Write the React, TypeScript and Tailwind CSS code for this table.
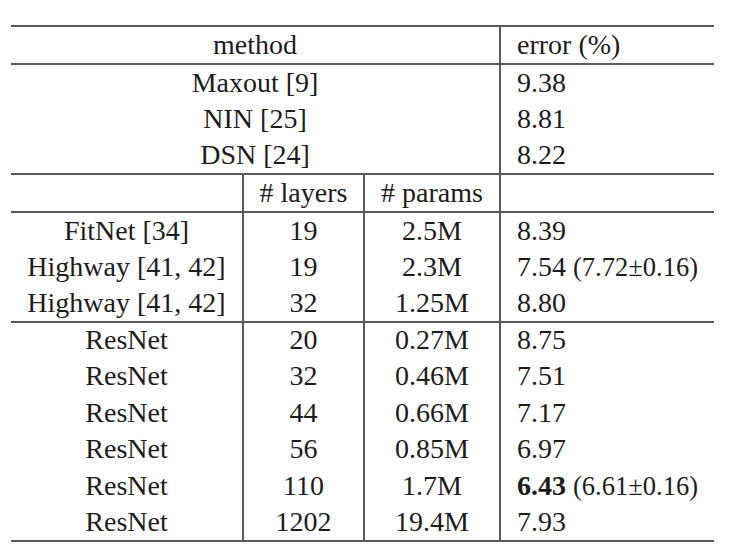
import { ReactNode } from "react";

const line = "border-[#5a5a5a]";

interface CellProps {
  children?: ReactNode;
  className?: string;
  colSpan?: number;
}

const C = ({ children, className = "", colSpan }: CellProps) => (
  <td colSpan={colSpan} className={`p-0 text-center whitespace-nowrap ${className}`}>
    {children}
  </td>
);

const E = ({ children, className = "" }: CellProps) => (
  <td className={`p-0 pl-[16px] text-left whitespace-nowrap border-l-2 ${line} ${className}`}>
    {children}
  </td>
);

const Paren = ({ children }: { children: ReactNode }) => (
  <span className="text-[26.5px]">{children}</span>
);

const top = [
  ["Maxout [9]", "9.38"],
  ["NIN [25]", "8.81"],
  ["DSN [24]", "8.22"],
];

const resnet: [string, string, ReactNode][] = [
  ["20", "0.27M", "8.75"],
  ["32", "0.46M", "7.51"],
  ["44", "0.66M", "7.17"],
  ["56", "0.85M", "6.97"],
  [
    "110",
    "1.7M",
    <>
      <b>6.43</b> <Paren>(6.61±0.16)</Paren>
    </>,
  ],
  ["1202", "19.4M", "7.93"],
];

export default function App() {
  return (
    <div className="w-[755px] h-[554px] bg-white pt-[25px] pl-[11px] text-[#1c1c1c] font-['Liberation_Serif','Times_New_Roman',serif] text-[28px] leading-none">
      <table className="table-fixed border-collapse w-[703px]">
        <colgroup>
          <col className="w-[232px]" />
          <col className="w-[121px]" />
          <col className="w-[136px]" />
          <col className="w-[214px]" />
        </colgroup>
        <tbody>
          <tr className={`h-[38px] border-t-2 border-b-2 ${line}`}>
            <C colSpan={3}>method</C>
            <E>error (%)</E>
          </tr>
          {top.map(([m, e]) => (
            <tr key={m} className="h-[36.6px]">
              <C colSpan={3}>{m}</C>
              <E>{e}</E>
            </tr>
          ))}
          <tr className={`h-[38px] border-t-2 border-b-2 ${line}`}>
            <C />
            <C className={`border-l-2 ${line}`}># layers</C>
            <C className={`border-l-2 ${line}`}># params</C>
            <E />
          </tr>
          <tr className="h-[36.6px]">
            <C>FitNet [34]</C>
            <C className={`border-l-2 ${line}`}>19</C>
            <C className={`border-l-2 ${line}`}>2.5M</C>
            <E>8.39</E>
          </tr>
          <tr className="h-[36.6px]">
            <C>Highway [41, 42]</C>
            <C className={`border-l-2 ${line}`}>19</C>
            <C className={`border-l-2 ${line}`}>2.3M</C>
            <E>
              7.54 <Paren>(7.72±0.16)</Paren>
            </E>
          </tr>
          <tr className={`h-[36.6px] border-b-2 ${line}`}>
            <C>Highway [41, 42]</C>
            <C className={`border-l-2 ${line}`}>32</C>
            <C className={`border-l-2 ${line}`}>1.25M</C>
            <E>8.80</E>
          </tr>
          {resnet.map(([l, p, e], i) => (
            <tr key={l} className={`h-[36.5px] ${i === resnet.length - 1 ? `border-b-2 ${line}` : ""}`}>
              <C>ResNet</C>
              <C className={`border-l-2 ${line}`}>{l}</C>
              <C className={`border-l-2 ${line}`}>{p}</C>
              <E>{e}</E>
            </tr>
          ))}
        </tbody>
      </table>
    </div>
  );
}
